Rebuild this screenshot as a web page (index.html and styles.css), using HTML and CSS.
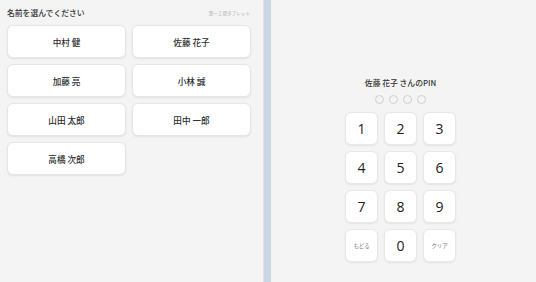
FILE: index.html
```html
<!DOCTYPE html>
<html lang="ja">
<head>
  <meta charset="UTF-8">
  <title>PIN入力</title>
  <link rel="stylesheet" href="styles.css">
</head>
<body>
  <div class="screen">
    <section class="names">
      <div class="names-head">
        <h1>名前を選んでください</h1>
        <span class="device">第一工場タブレット</span>
      </div>
      <div class="name-grid">
        <div class="name-btn">中村 健</div>
        <div class="name-btn">佐藤 花子</div>
        <div class="name-btn">加藤 亮</div>
        <div class="name-btn">小林 誠</div>
        <div class="name-btn">山田 太郎</div>
        <div class="name-btn">田中 一郎</div>
        <div class="name-btn">高橋 次郎</div>
      </div>
    </section>

    <section class="pin">
      <div class="pin-box">
        <h2>佐藤 花子 さんのPIN</h2>
        <div class="dots">
          <span></span><span></span><span></span><span></span>
        </div>
        <div class="keypad">
          <div class="key">1</div>
          <div class="key">2</div>
          <div class="key">3</div>
          <div class="key">4</div>
          <div class="key">5</div>
          <div class="key">6</div>
          <div class="key">7</div>
          <div class="key">8</div>
          <div class="key">9</div>
          <div class="key small">もどる</div>
          <div class="key">0</div>
          <div class="key small">クリア</div>
        </div>
      </div>
    </section>
  </div>
</body>
</html>
```

FILE: styles.css
```css
* {
  box-sizing: border-box;
}

html, body {
  margin: 0;
  height: 100%;
}

body {
  font-family: "Noto Sans CJK JP", "Noto Sans", sans-serif;
  background: #f4f4f4;
  color: #333;
  overflow: hidden;
}

.screen {
  display: flex;
  height: 282px;
}

/* left: name list */
.names {
  width: 264px;
  padding: 0 12px 0 7px;
  border-right: 1px solid #e2e2e2;
  flex-shrink: 0;
}
.names-head {
  display: flex;
  justify-content: space-between;
  align-items: center;
  height: 25px;
}
.names-head h1 {
  margin: 0;
  font-size: 7.8px;
  font-weight: 500;
  color: #333;
}
.device {
  font-size: 4.6px;
  color: #aaa;
  margin-right: 1px;
}
.name-grid {
  display: grid;
  grid-template-columns: 1fr 1fr;
  gap: 6px 6px;
}
.name-btn {
  height: 33px;
  display: flex;
  align-items: center;
  justify-content: center;
  background: #fff;
  border: 1px solid #e6e6e6;
  border-radius: 6px;
  box-shadow: 0 1px 2px rgba(0, 0, 0, 0.08);
  font-size: 8.6px;
  font-weight: 500;
  color: #2e2e2e;
}

/* right: PIN keypad */
.pin {
  flex: 1;
  border-left: 7px solid #cbd6e4;
  display: flex;
  justify-content: center;
  padding-right: 6px;
}
.pin-box {
  padding-top: 76px;
  display: flex;
  flex-direction: column;
  align-items: center;
}
.pin-box h2 {
  margin: 0;
  font-size: 7.8px;
  font-weight: 500;
  color: #333;
  line-height: 14px;
}
.dots {
  display: flex;
  gap: 5px;
  margin: 5px 0 8px;
}
.dots span {
  width: 9px;
  height: 9px;
  border: 1px solid #cfcfcf;
  border-radius: 50%;
}
.keypad {
  display: grid;
  grid-template-columns: repeat(3, 33px);
  gap: 6px;
}
.key {
  height: 33px;
  display: flex;
  align-items: center;
  justify-content: center;
  background: #fff;
  border: 1px solid #e8e8e8;
  border-radius: 6px;
  box-shadow: 0 1px 2px rgba(0, 0, 0, 0.07);
  font-family: "Open Sans", "Noto Sans", sans-serif;
  font-size: 14px;
  color: #222;
}
.key.small {
  font-family: "Noto Sans CJK JP", sans-serif;
  font-size: 5.4px;
  color: #777;
}
```
